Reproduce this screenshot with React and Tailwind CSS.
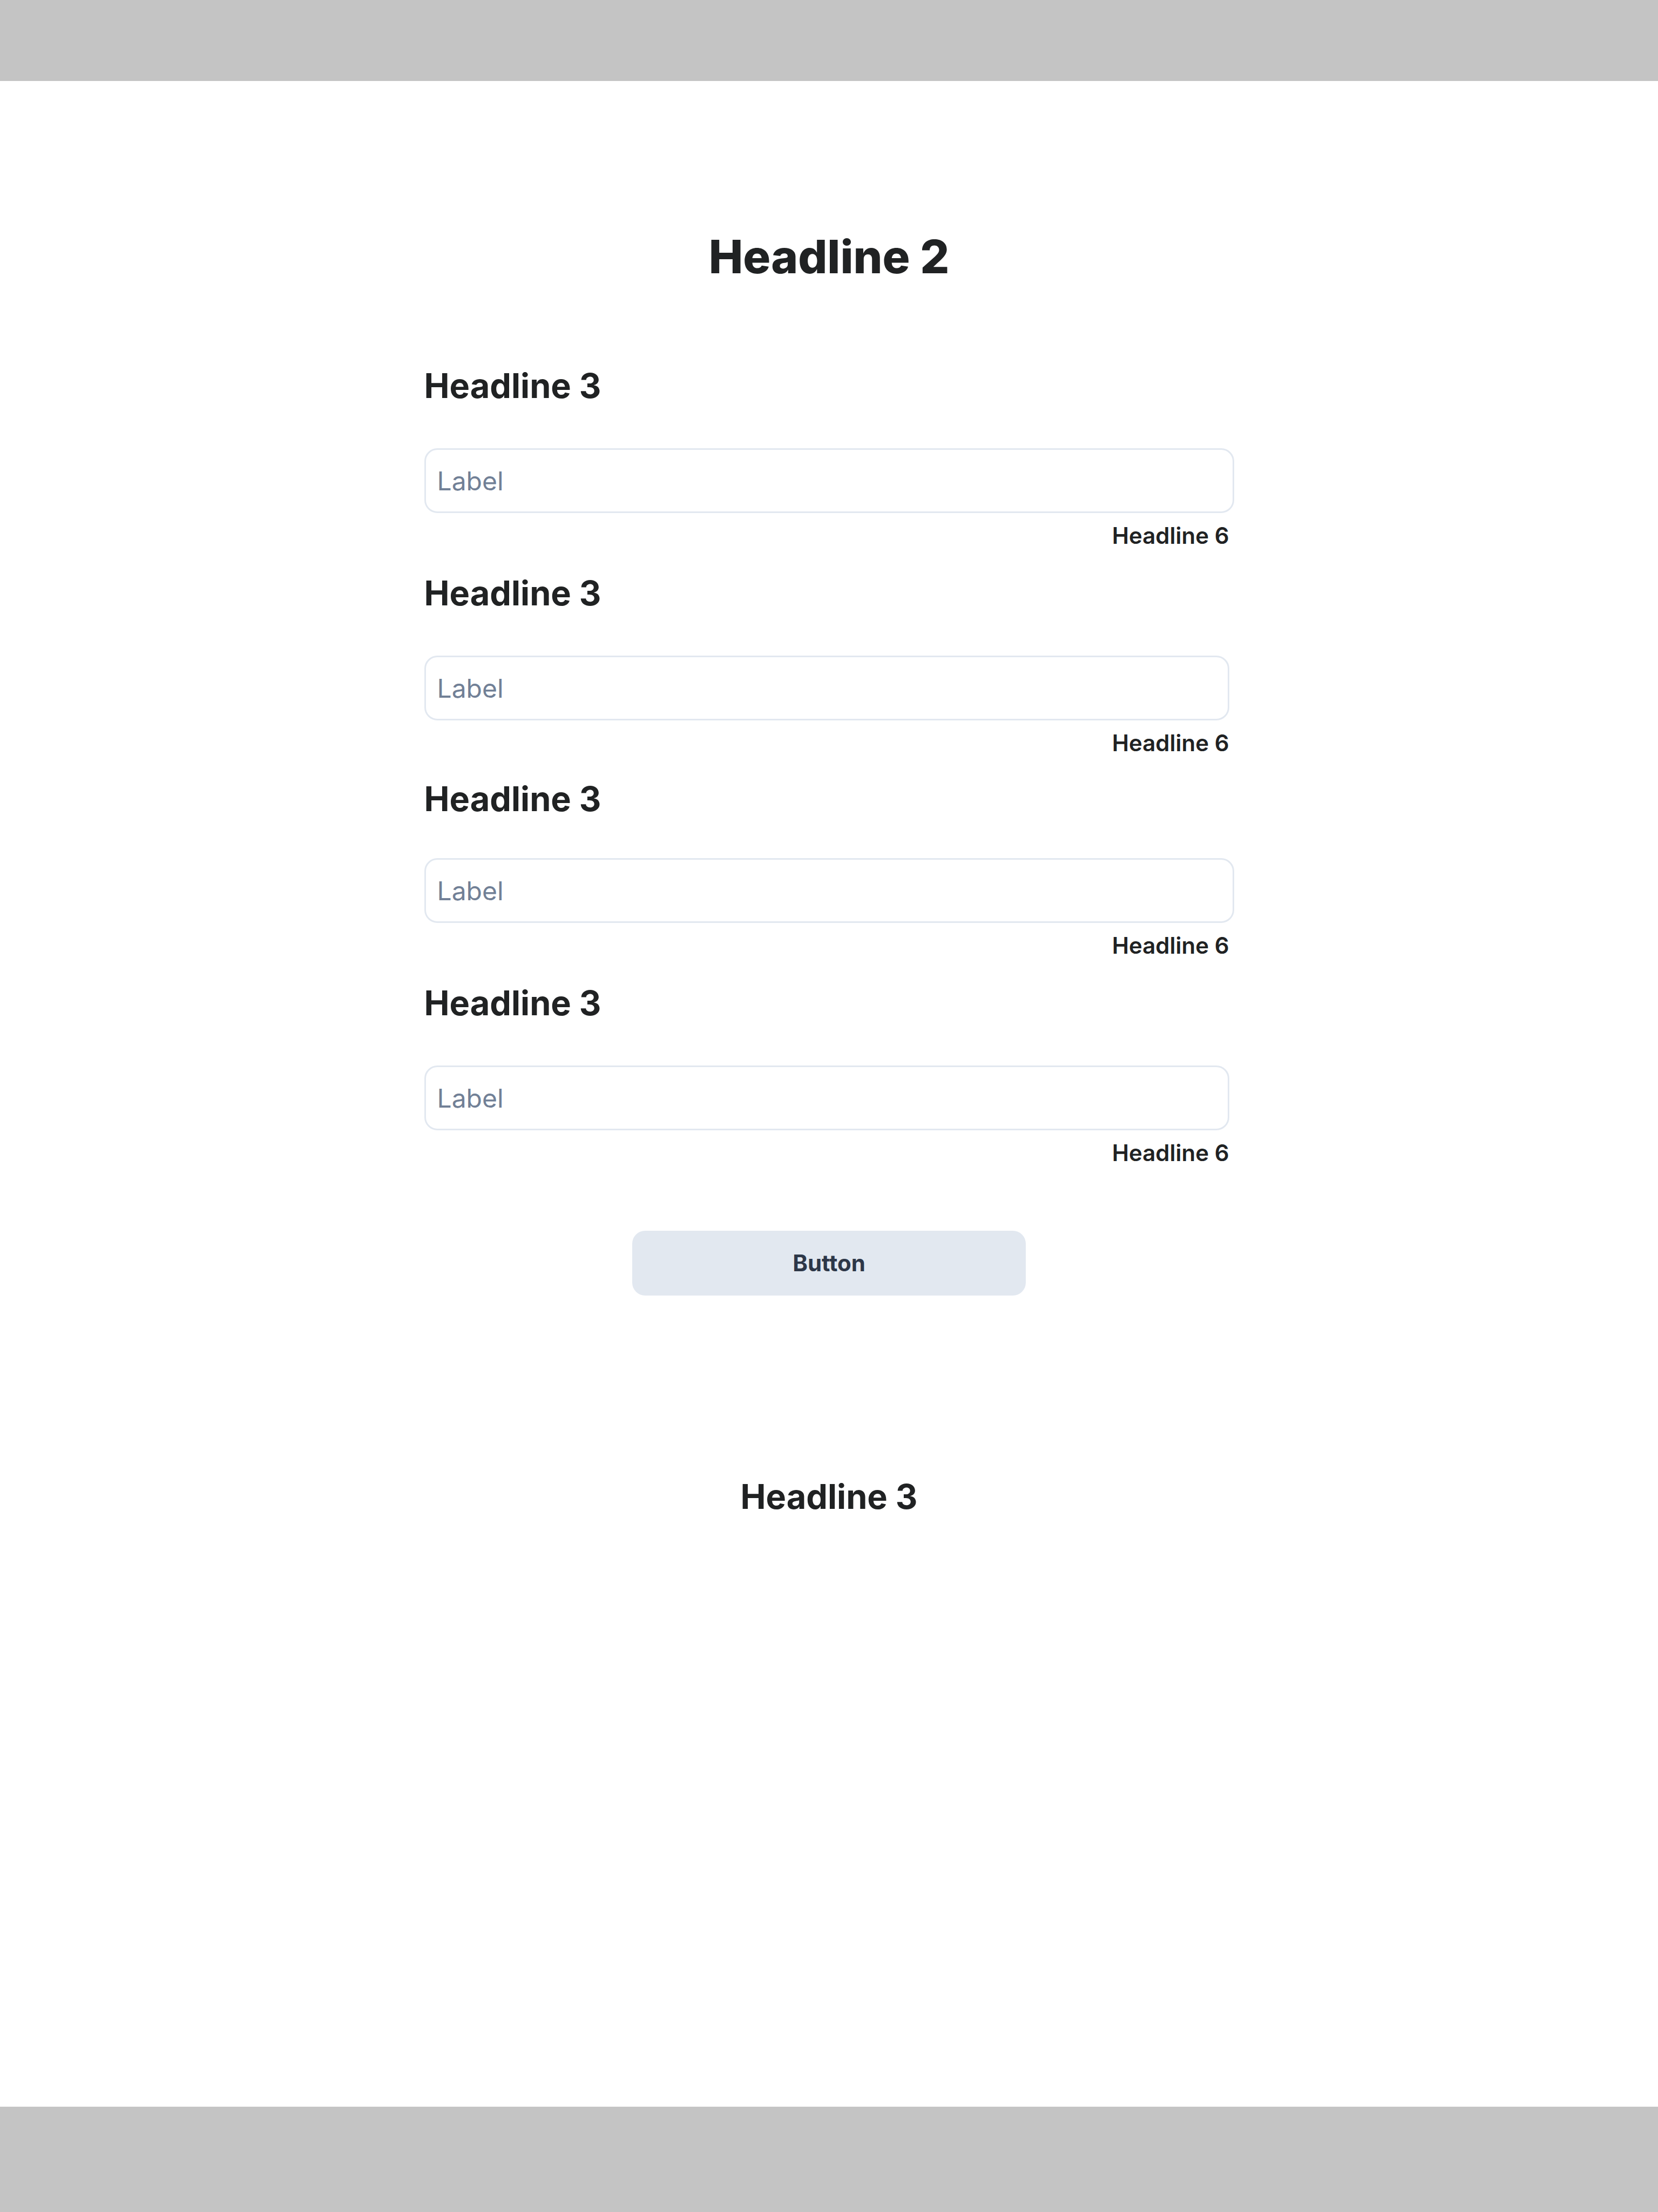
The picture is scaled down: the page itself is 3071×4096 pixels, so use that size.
const fields = [
  { id: "field-1", spacing: "", gap: "mt-[78px]", width: "max-w-[1500px]" },
  { id: "field-2", spacing: "mt-[43px]", gap: "mt-[78px]", width: "max-w-[1491px]" },
  { id: "field-3", spacing: "mt-10", gap: "mt-[72px]", width: "max-w-[1500px]" },
  { id: "field-4", spacing: "mt-[43px]", gap: "mt-[78px]", width: "max-w-[1491px]" },
];

function Field({ id, spacing, gap, width }) {
  return (
    <div className={`flex flex-col ${spacing}`}>
      <label htmlFor={id} className="text-[63px] leading-[76px] font-bold">
        Headline 3
      </label>
      <input
        id={id}
        type="text"
        placeholder="Label"
        className={`h-[120px] w-full rounded-3xl border-3 border-[#e2e8f0] bg-transparent px-[21px] text-5xl text-[#718096] outline-none placeholder:text-[#718096] placeholder:opacity-100 ${gap} ${width}`}
      />
      <p className="mt-[17px] pr-[9px] text-right text-[42px] leading-[50px] font-semibold">
        Headline 6
      </p>
    </div>
  );
}

export default function App() {
  return (
    <div className="flex min-h-screen flex-col bg-white font-['Inter',sans-serif] text-[#202223]">
      <header className="h-[150px] shrink-0 bg-[#c4c4c4]" />
      <main className="flex flex-1 flex-col items-center pt-[275px]">
        <h1 className="text-[85px] leading-[102px] font-extrabold">Headline 2</h1>
        <form
          className="mt-[149px] flex w-full max-w-[1500px] flex-col"
          onSubmit={(event) => event.preventDefault()}
        >
          {fields.map((field) => (
            <Field key={field.id} {...field} />
          ))}
          <button
            type="submit"
            className="mt-[119px] h-[120px] w-full max-w-[729px] self-center rounded-3xl bg-[#e2e8f0] text-[42px] leading-[50px] font-bold text-[#2d3748]"
          >
            Button
          </button>
        </form>
        <h2 className="mt-[334px] text-[63px] leading-[76px] font-bold">Headline 3</h2>
      </main>
      <footer className="h-[195px] shrink-0 bg-[#c4c4c4]" />
    </div>
  );
}
